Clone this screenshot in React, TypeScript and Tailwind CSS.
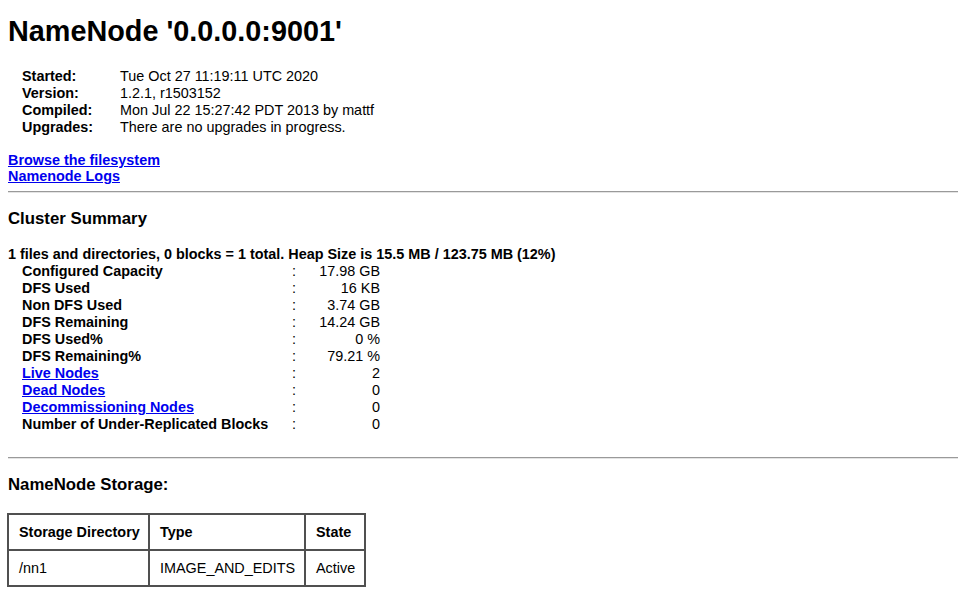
import React from 'react';

// dfshealth page of the Hadoop 1.x NameNode
const info = [
  { label: 'Started:', value: 'Tue Oct 27 11:19:11 UTC 2020' },
  { label: 'Version:', value: '1.2.1, r1503152' },
  { label: 'Compiled:', value: 'Mon Jul 22 15:27:42 PDT 2013 by mattf' },
  { label: 'Upgrades:', value: 'There are no upgrades in progress.' },
];

const summary = [
  { label: 'Configured Capacity', value: '17.98 GB' },
  { label: 'DFS Used', value: '16 KB' },
  { label: 'Non DFS Used', value: '3.74 GB' },
  { label: 'DFS Remaining', value: '14.24 GB' },
  { label: 'DFS Used%', value: '0 %' },
  { label: 'DFS Remaining%', value: '79.21 %' },
  { label: 'Live Nodes', value: '2', link: true },
  { label: 'Dead Nodes', value: '0', link: true },
  { label: 'Decommissioning Nodes', value: '0', link: true },
  { label: 'Number of Under-Replicated Blocks', value: '0' },
];

const Rule = ({ className }: { className: string }) => (
  <div className={`h-[2px] border-t border-[#9a9a9a] border-b border-b-[#e4e4e4] ${className}`} />
);

const App: React.FC = () => {
  return (
    <div className="min-h-screen bg-white pl-[8px] pt-[15px] pb-[8px] text-black text-[14.4px] font-['Liberation_Sans',Arial,sans-serif]">
      <h1 className="text-[28.8px] leading-[33px] font-bold">NameNode '0.0.0.0:9001'</h1>

      <div className="mt-[20px] ml-[14px]">
        {info.map((row) => (
          <div key={row.label} className="flex h-[17px] leading-[17px]">
            <div className="w-[98px] font-bold">{row.label}</div>
            <div>{row.value}</div>
          </div>
        ))}
      </div>

      <div className="mt-[16px] flex flex-col items-start font-bold leading-[16px]">
        <a href="#" className="text-[#0000ee] underline">Browse the filesystem</a>
        <a href="#" className="text-[#0000ee] underline">Namenode Logs</a>
      </div>

      <Rule className="mt-[7px]" />

      <h3 className="mt-[16px] text-[16.8px] leading-[19px] font-bold">Cluster Summary</h3>

      <div className="mt-[18px] h-[17px] leading-[17px] font-bold">
        1 files and directories, 0 blocks = 1 total. Heap Size is 15.5 MB / 123.75 MB (12%)
      </div>
      <div className="ml-[14px]">
        {summary.map((row) => (
          <div key={row.label} className="grid grid-cols-[270px_20px_68px] h-[17px] leading-[17px]">
            <div className="font-bold">
              {row.link ? (
                <a href="#" className="text-[#0000ee] underline">{row.label}</a>
              ) : (
                row.label
              )}
            </div>
            <div>:</div>
            <div className="text-right">{row.value}</div>
          </div>
        ))}
      </div>

      <Rule className="mt-[24px]" />

      <h3 className="mt-[16px] text-[16.8px] leading-[19px] font-bold">NameNode Storage:</h3>

      <div className="mt-[19px] -ml-px inline-grid grid-cols-[141px_156px_60px] border-l-2 border-t-2 border-[#505050]">
        {['Storage Directory', 'Type', 'State'].map((h) => (
          <div key={h} className="h-[36px] leading-[34px] pl-[10px] border-r-2 border-b-2 border-[#505050] font-bold">
            {h}
          </div>
        ))}
        {['/nn1', 'IMAGE_AND_EDITS', 'Active'].map((c) => (
          <div key={c} className="h-[36px] leading-[34px] pl-[10px] border-r-2 border-b-2 border-[#505050]">
            {c}
          </div>
        ))}
      </div>
    </div>
  );
};

export default App;
